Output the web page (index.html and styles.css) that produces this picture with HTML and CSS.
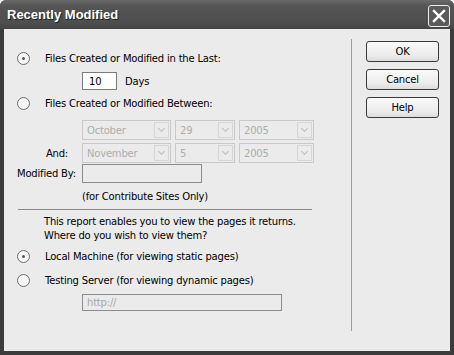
FILE: index.html
```html
<!DOCTYPE html>
<html lang="en">
<head>
    <meta charset="UTF-8">
    <title>Recently Modified</title>
    <link rel="stylesheet" href="styles.css">
</head>
<body>
    <div class="window">
        <div class="titlebar">
            <span class="title">Recently Modified</span>
            <span class="close">
                <svg width="14" height="14" viewBox="0 0 14 14"><path d="M2 2 L12 12 M12 2 L2 12" stroke="#fff" stroke-width="2.4" stroke-linecap="square"/></svg>
            </span>
        </div>
        <div class="content">
            <div class="main">
                <div class="row r1">
                    <span class="radio checked"></span>
                    <span>Files Created or Modified in the Last:</span>
                </div>
                <div class="row indent days">
                    <span class="textbox num">10</span>
                    <span>Days</span>
                </div>
                <div class="row r2">
                    <span class="radio"></span>
                    <span>Files Created or Modified Between:</span>
                </div>
                <div class="row indent sel1">
                    <span class="select month">October<i class="arrow"></i></span>
                    <span class="select day">29<i class="arrow"></i></span>
                    <span class="select year">2005<i class="arrow"></i></span>
                </div>
                <div class="row sel2">
                    <span class="label and">And:</span>
                    <span class="select month">November<i class="arrow"></i></span>
                    <span class="select day">5<i class="arrow"></i></span>
                    <span class="select year">2005<i class="arrow"></i></span>
                </div>
                <div class="row modby">
                    <span class="label">Modified By:</span>
                    <span class="textbox disabled who"></span>
                </div>
                <div class="row indent note">(for Contribute Sites Only)</div>
                <div class="separator"></div>
                <p class="report">This report enables you to view the pages it returns.<br>Where do you wish to view them?</p>
                <div class="row r3">
                    <span class="radio checked"></span>
                    <span>Local Machine (for viewing static pages)</span>
                </div>
                <div class="row r4">
                    <span class="radio"></span>
                    <span>Testing Server (for viewing dynamic pages)</span>
                </div>
                <div class="row indent url">
                    <span class="textbox disabled http">http://</span>
                </div>
            </div>
            <div class="divider"></div>
            <div class="buttons">
                <button class="ok">OK</button>
                <button>Cancel</button>
                <button>Help</button>
            </div>
        </div>
    </div>
</body>
</html>
```
FILE: styles.css
```css
body {
    margin: 0;
    font-family: "DejaVu Sans", Verdana, sans-serif;
    font-size: 10px;
    letter-spacing: -0.2px;
    color: #000;
}
.window {
    width: 454px;
    height: 355px;
    box-sizing: border-box;
    background: #3c3c3c;
    padding: 0 4px 4px 4px;
    display: flex;
    flex-direction: column;
    border-radius: 6px 6px 0 0;
}
.titlebar {
    height: 29px;
    display: flex;
    align-items: center;
    justify-content: space-between;
    background: linear-gradient(#6a6a6a, #555 20%, #4d4d4d 80%, #444);
    margin: 0 -4px;
    padding: 0 4px 0 7px;
    border-radius: 6px 6px 0 0;
}
.title {
    color: #fff;
    font-family: "Liberation Sans", Arial, sans-serif;
    font-weight: bold;
    font-size: 13px;
    letter-spacing: 0;
    text-shadow: 1px 1px 0 #222;
}
.close {
    width: 20px;
    height: 20px;
    border: 1px solid #eee;
    border-radius: 3px;
    background: #5a5a5a;
    display: flex;
    align-items: center;
    justify-content: center;
    margin-top: 2px;
}
.content {
    flex: 1;
    background: #ebebeb;
    display: flex;
}
.main {
    width: 345px;
    padding: 20px 0 0 13px;
    box-sizing: border-box;
}
.row {
    display: flex;
    align-items: center;
    height: 18px;
}
.indent {
    padding-left: 65px;
}
.radio {
    width: 11px;
    height: 11px;
    border: 1px solid #6b6b6b;
    border-radius: 50%;
    background: #f6f6f6;
    margin-right: 15px;
    display: flex;
    align-items: center;
    justify-content: center;
}
.radio.checked::after {
    content: "";
    width: 3px;
    height: 3px;
    border-radius: 50%;
    background: #555;
}
.days { margin-top: 5px; }
.r2 { margin-top: 4px; }
.sel1 { margin-top: 8px; height: 20px; }
.sel2 { margin-top: 3px; height: 20px; }
.modby { margin-top: 1px; height: 19px; }
.note { margin-top: 5px; height: 16px; }
.r3 { margin-top: 4px; }
.r4 { margin-top: 6px; }
.url { margin-top: 5px; height: 17px; }
.label {
    width: 56px;
    text-align: right;
    white-space: nowrap;
    padding-right: 9px;
}
.label.and {
    padding-right: 14px;
    width: 51px;
}
.textbox {
    box-sizing: border-box;
    height: 18px;
    border: 1px solid #7a7a7a;
    background: #fff;
    display: flex;
    align-items: center;
    padding-left: 6px;
}
.num {
    width: 35px;
    margin-right: 8px;
}
.textbox.disabled {
    background: #ebebeb;
    border-color: #8c8c8c;
    color: #a8a8a8;
}
.who {
    width: 120px;
    height: 19px;
}
.http {
    width: 200px;
    height: 17px;
    padding-left: 4px;
}
.select {
    box-sizing: border-box;
    height: 20px;
    border: 1px solid #c9c9c9;
    color: #adadad;
    display: flex;
    align-items: center;
    justify-content: space-between;
    padding-left: 4px;
    margin-right: 4px;
}
.month { width: 89px; }
.day { width: 60px; }
.year { width: 75px; }
.arrow {
    width: 15px;
    height: 16px;
    margin-right: 1px;
    border: 1px solid #d6d6d6;
    box-sizing: border-box;
    display: flex;
    align-items: center;
    justify-content: center;
}
.arrow::after {
    content: "";
    width: 4px;
    height: 4px;
    border-right: 1px solid #bdbdbd;
    border-bottom: 1px solid #bdbdbd;
    transform: rotate(45deg);
    margin-top: -3px;
}
.separator {
    margin: 5px 0 0 1px;
    width: 294px;
    height: 1px;
    background: #8a8a8a;
}
.report {
    margin: 5px 0 0 27px;
    line-height: 14px;
}
.divider {
    width: 1px;
    margin: 10px 0 20px 2px;
    background: #9a9a9a;
}
.buttons {
    display: flex;
    flex-direction: column;
    gap: 7px;
    padding: 12px 0 0 14px;
}
.buttons button {
    width: 73px;
    height: 21px;
    border: 1px solid #3a3a3a;
    border-radius: 3px;
    background: linear-gradient(#fafafa, #ececec 70%, #dcdcdc);
    font-family: "DejaVu Sans", Verdana, sans-serif;
    font-size: 10px;
    letter-spacing: -0.2px;
    padding: 0;
}
```
